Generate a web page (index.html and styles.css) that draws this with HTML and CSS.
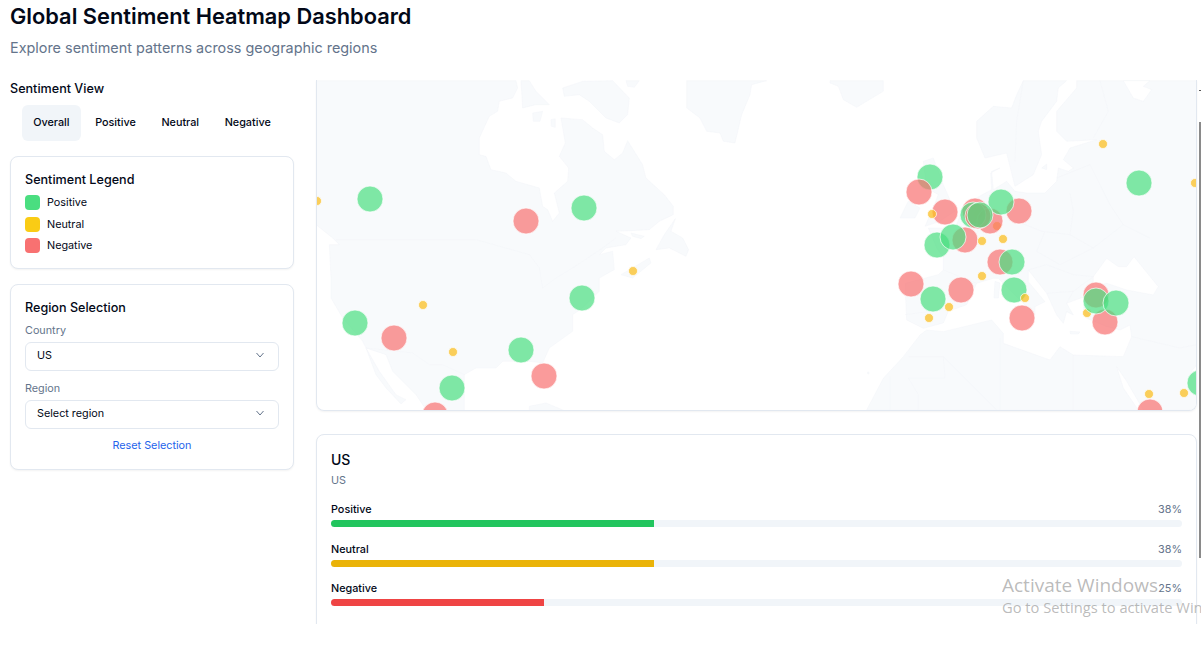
FILE: index.html
```html
<!DOCTYPE html>
<html lang="en">
<head>
    <meta charset="UTF-8">
    <title>Global Sentiment Heatmap Dashboard</title>
    <link rel="stylesheet" href="styles.css">
</head>
<body>
<div class="page">
    <header class="header">
        <h1>Global Sentiment Heatmap Dashboard</h1>
        <p>Explore sentiment patterns across geographic regions</p>
    </header>

    <div class="layout">
        <aside class="sidebar">
            <h2 class="view-title">Sentiment View</h2>
            <div class="tabs">
                <button class="tab active">Overall</button>
                <button class="tab">Positive</button>
                <button class="tab">Neutral</button>
                <button class="tab">Negative</button>
            </div>

            <section class="card legend">
                <h3>Sentiment Legend</h3>
                <div class="legend-row"><span class="swatch green"></span>Positive</div>
                <div class="legend-row"><span class="swatch yellow"></span>Neutral</div>
                <div class="legend-row"><span class="swatch red"></span>Negative</div>
            </section>

            <section class="card region">
                <h3>Region Selection</h3>
                <label>Country</label>
                <div class="select">US
                    <svg width="12" height="12" viewBox="0 0 24 24"><path d="M5 8l7 8 7-8"/></svg>
                </div>
                <label>Region</label>
                <div class="select">Select region
                    <svg width="12" height="12" viewBox="0 0 24 24"><path d="M5 8l7 8 7-8"/></svg>
                </div>
                <a class="reset">Reset Selection</a>
            </section>
        </aside>

        <main class="main">
            <div class="map-card">
                <svg class="map" width="881" height="331" viewBox="316 80 881 331">
                    <!-- North America -->
                    <g class="land" transform="translate(316 78) scale(0.3333)">
                        <path d="M0 8L600 8L605 30L590 60L550 70L545 100L520 115L490 180L490 230L510 235L525 275L570 285L600 310L670 330L680 385L695 395L710 430L730 405L715 345L755 310L758 270L730 235L748 195L735 120L800 125L830 150L860 170L865 220L895 245L920 225L935 188L980 260L990 300L1045 350L1072 385L1072 410L1030 430L1000 455L945 458L900 460L945 480L930 500L870 510L850 530L890 520L895 575L850 600L850 640L800 690L770 710L770 760L700 810L680 855L640 850L600 850L560 850L540 870L480 870L445 890L445 1010L340 1010L300 950L230 880L210 830L150 810L140 790L80 720L45 660L45 600L40 500L70 500L50 480L0 440Z"/>
                        <path d="M150 810L190 880L240 950L270 965L255 978L210 930L180 890Z"/>
                        <path d="M615 8L620 90L660 80L700 80L660 40L640 8Z"/>
                        <path d="M650 105L680 100L672 130L652 130Z"/>
                        <path d="M705 125L718 122L718 148L706 145Z"/>
                        <path d="M740 30L800 10L890 8L940 60L935 110L910 135L870 120L820 70L790 50L745 55Z"/>
                        <path d="M930 8L970 8L955 28L935 25Z"/>
                        <path d="M1020 515L1045 470L1078 422L1065 460L1100 480L1118 515L1110 535L1060 510Z"/>
                        <path d="M915 590L1000 540L1005 555L950 600Z"/>
                        <path d="M945 465L985 475L975 482L950 475Z"/>
                        <path d="M640 985L690 975L750 1000L640 1000Z"/>
                        <path class="line" d="M60 485L480 485L640 530L670 570L680 630L720 600L770 570L860 510L900 480"/>
                        <path class="line" d="M150 810L290 825L340 860L380 860L445 890"/>
                    </g>
                    <!-- Greenland and the island north of Europe -->
                    <g class="land" transform="translate(700 78) scale(0.3333)">
                        <path d="M-40 8L200 8L155 20L150 50L125 110L105 195L70 190L60 165L20 160L0 120L-40 90Z"/>
                        <path d="M390 8L550 8L550 40L470 88L430 65L415 25L390 15Z"/>
                        <circle cx="505" cy="885" r="3"/>
                    </g>
                    <!-- Europe, Africa and the Middle East: y below 486 continues the lower half -->
                    <g class="land" transform="translate(860 78) scale(0.3333)">
                        <path d="M490 8L470 50L455 90L400 85L350 130L350 180L375 240L440 225L465 325L520 290L545 230L535 160L545 130L590 70L595 30L620 8Z"/>
                        <path d="M650 8L650 30L590 100L590 160L620 190L710 185L630 210L610 245L640 270L625 280L595 270L590 310L555 345L500 345L465 340L440 310L400 335L395 280L420 270L392 285L395 335L345 362L310 385L290 440L250 450L205 450L230 510L250 540L250 576L235 590L135 616L140 726L190 751L250 735L265 700L320 680L350 616L400 601L415 601L450 636L495 681L525 711L525 686L555 671L505 611L505 576L560 646L590 711L610 736L620 701L640 711L620 676L660 661L700 651L670 686L680 721L740 746L780 756L810 741L815 776L790 836L640 831L600 806L570 846L430 796L430 766L395 726L250 761L200 756L180 771L130 836L70 901L20 996L1011 996L1011 8Z"/>
                        <path class="sea" d="M790 8L820 60L850 70L875 35L850 25L870 8Z"/>
                        <path class="sea" d="M700 596L740 541L775 566L800 566L822 536L895 626L880 651L800 636L740 616L700 626Z"/>
                        <path class="sea" d="M770 866L800 910L850 996L835 996L790 930Z"/>
                        <path class="sea" d="M1011 860L995 880L1011 905Z"/>
                        <path d="M190 250L220 240L250 320L285 400L240 430L195 445L215 400L235 350L200 330Z"/>
                        <path d="M120 420L145 370L180 390L165 420Z"/>
                        <path d="M405 610L420 615L415 660L402 660Z"/>
                        <path d="M630 760L660 762L655 768L632 768Z"/>
                        <path d="M545 270L560 258L560 275Z"/>
                        <path class="line" d="M490 8L470 130L465 250M720 8L745 100L700 180M690 260L590 300M690 260L750 380L790 440L870 480M630 345L640 400L630 470L545 460L470 430M630 470L700 510L790 440M555 460L530 520L600 560L700 510M505 576L560 560L640 590L700 596M560 646L640 640L700 596M640 831L640 996M420 780L420 996M145 836L250 836L410 996M250 836L255 900L145 900L175 950L175 996M90 896L90 996M815 776L960 810L1011 800M640 640L620 676M290 440L350 470L395 335M250 576L350 616M135 710L210 700"/>
                    </g>
                </svg>
                <svg class="map dots" width="881" height="331" viewBox="316 80 881 331">
                    <g class="dot-y">
                        <circle cx="317" cy="201" r="4.5"/><circle cx="633" cy="271" r="4.5"/>
                        <circle cx="423" cy="305" r="4.5"/><circle cx="453" cy="352" r="4.5"/>
                        <circle cx="1103" cy="144" r="4.5"/><circle cx="1195" cy="183" r="4.5"/>
                        <circle cx="997" cy="226" r="4.5"/><circle cx="1087" cy="313" r="4.5"/>
                        <circle cx="978" cy="214" r="4.5"/>
                    </g>
                    <g class="dot-g">
                        <circle cx="370" cy="199" r="13"/><circle cx="584" cy="208" r="13"/>
                        <circle cx="582" cy="298" r="13"/><circle cx="355" cy="323" r="13"/>
                        <circle cx="521" cy="350" r="13"/><circle cx="452" cy="388" r="13"/>
                        <circle cx="930" cy="177" r="13"/><circle cx="1139" cy="183" r="13"/>
                    </g>
                    <g class="dot-r">
                        <circle cx="526" cy="221" r="13"/><circle cx="394" cy="338" r="13"/>
                        <circle cx="544" cy="376" r="13"/><circle cx="435" cy="415" r="13"/>
                        <circle cx="919" cy="192" r="13"/><circle cx="945" cy="212" r="13"/>
                        <circle cx="975" cy="211" r="13"/><circle cx="990" cy="221" r="13"/>
                        <circle cx="1019" cy="211" r="13"/>
                        <circle cx="965" cy="240" r="13"/><circle cx="1000" cy="262" r="13"/>
                        <circle cx="911" cy="284" r="13"/><circle cx="961" cy="290" r="13"/>
                        <circle cx="1022" cy="318" r="13"/><circle cx="1096" cy="295" r="13"/>
                        <circle cx="1105" cy="322" r="13"/><circle cx="1150" cy="412" r="13"/>
                    </g>
                    <g class="dot-g">
                        <circle cx="1001" cy="202" r="13"/><circle cx="973" cy="215" r="13"/>
                    </g>
                    <g class="dot-r">
                        <circle cx="978" cy="216" r="13"/>
                    </g>
                    <g class="dot-g">
                        <circle cx="980" cy="215" r="13"/><circle cx="937" cy="245" r="13"/>
                        <circle cx="953" cy="237" r="13"/><circle cx="1012" cy="262" r="13"/>
                        <circle cx="933" cy="299" r="13"/><circle cx="1014" cy="290" r="13"/>
                        <circle cx="1096" cy="301" r="13"/><circle cx="1116" cy="303" r="13"/>
                        <circle cx="1200" cy="383" r="13"/>
                    </g>
                    <g class="dot-y">
                        <circle cx="932" cy="214" r="4.5"/><circle cx="982" cy="241" r="4.5"/>
                        <circle cx="1003" cy="239" r="4.5"/>
                        <circle cx="982" cy="276" r="4.5"/><circle cx="949" cy="307" r="4.5"/>
                        <circle cx="929" cy="318" r="4.5"/><circle cx="1025" cy="298" r="4.5"/>
                        <circle cx="1149" cy="394" r="4.5"/><circle cx="1184" cy="393" r="4.5"/>
                    </g>
                </svg>
            </div>

            <section class="card details">
                <h3>US</h3>
                <p class="sub">US</p>
                <div class="stat">
                    <div class="stat-label"><span>Positive</span><span class="pct">38%</span></div>
                    <div class="track"><div class="fill fill-green" style="width:38%"></div></div>
                </div>
                <div class="stat">
                    <div class="stat-label"><span>Neutral</span><span class="pct">38%</span></div>
                    <div class="track"><div class="fill fill-yellow" style="width:38%"></div></div>
                </div>
                <div class="stat">
                    <div class="stat-label"><span>Negative</span><span class="pct">25%</span></div>
                    <div class="track"><div class="fill fill-red" style="width:25%"></div></div>
                </div>
            </section>
        </main>
    </div>

    <div class="thumb"></div>
    <div class="watermark">
        <div class="wm-big">Activate Windows</div>
        <div class="wm-small">Go to Settings to activate Windows.</div>
    </div>
</div>
</body>
</html>
```

FILE: styles.css
```css
* {
    box-sizing: border-box;
}
html, body {
    margin: 0;
    background: #fff;
}
body {
    font-family: Inter, "Liberation Sans", sans-serif;
    color: #020817;
    overflow: hidden;
}
.page {
    position: relative;
    height: 624px;
    overflow: hidden;
}
.header {
    padding: 0 10px;
    height: 80px;
}
.header h1 {
    margin: 0;
    padding-top: 2px;
    font-size: 21.8px;
    line-height: 28px;
    font-weight: 600;
}
.header p {
    margin: 8px 0 0;
    font-size: 14.4px;
    line-height: 20px;
    color: #64748b;
}
.layout {
    display: flex;
    gap: 22px;
    padding-left: 10px;
}
.sidebar {
    width: 284px;
    flex: none;
}
.view-title {
    margin: 0;
    font-size: 12.6px;
    line-height: 18px;
    font-weight: 450;
}
.tabs {
    display: flex;
    justify-content: center;
    gap: 3.6px;
    margin-top: 7px;
}
.tab {
    border: 0;
    background: none;
    font: 450 10.8px Inter, sans-serif;
    color: #020817;
    height: 36px;
    padding: 0 11px 2px;
    border-radius: 6px;
}
.tab.active {
    background: #f1f5f9;
}
.card {
    background: #fff;
    border: 1px solid #e2e8f0;
    border-radius: 8px;
    box-shadow: 0 1px 2px rgba(0, 0, 0, 0.05);
}
.card h3 {
    margin: 0;
    font-size: 12.6px;
    line-height: 18px;
    font-weight: 450;
}
.legend {
    margin-top: 15px;
    height: 113px;
    padding: 14px;
}
.legend h3 {
    margin-bottom: 6px;
}
.legend-row {
    display: flex;
    align-items: center;
    gap: 7px;
    height: 15px;
    margin-top: 6px;
    font-size: 10.8px;
    line-height: 13px;
}
.legend h3 + .legend-row + .legend-row {
    margin-top: 7px;
}
.swatch {
    width: 15px;
    height: 15px;
    border-radius: 4px;
}
.green { background: #4ade80; }
.yellow { background: #facc15; }
.red { background: #f87171; }
.region {
    margin-top: 15px;
    height: 186px;
    padding: 14px 14px;
    display: flex;
    flex-direction: column;
}
.region label {
    margin-top: 6px;
    font-size: 10.8px;
    line-height: 16px;
    color: #64748b;
}
.region label + .select + label {
    margin-top: 10px;
}
.select {
    display: flex;
    align-items: center;
    justify-content: space-between;
    height: 29px;
    margin-top: 3px;
    padding: 0 12px 3px 11px;
    border: 1px solid #e2e8f0;
    border-radius: 6px;
    font-size: 10.8px;
}
.select svg {
    fill: none;
    stroke: #64748b;
    stroke-width: 2;
}
.reset {
    margin-top: 9px;
    text-align: center;
    font-size: 10.8px;
    line-height: 16px;
    color: #2563eb;
}
.main {
    width: 881px;
    flex: none;
}
.map-card {
    position: relative;
    height: 331px;
    border: 1px solid #e2e8f0;
    border-top: 0;
    border-radius: 0 0 8px 8px;
    box-shadow: 0 1px 2px rgba(0, 0, 0, 0.05);
    overflow: hidden;
}
.map {
    position: absolute;
    left: -1px;
    top: 0;
    display: block;
}
.land path, .land circle {
    fill: #f8fafc;
    stroke: #f3f5f9;
    stroke-width: 1.5;
}
.land .line {
    fill: none;
}
.land .sea {
    fill: #fff;
}
.dot-g circle {
    fill: #4ade80;
    fill-opacity: 0.7;
    stroke: #fff;
    stroke-opacity: 0.7;
}
.dot-r circle {
    fill: #f87171;
    fill-opacity: 0.7;
    stroke: #fff;
    stroke-opacity: 0.7;
}
.dot-y circle {
    fill: #fbbf24;
    fill-opacity: 0.75;
    stroke: #fff;
    stroke-opacity: 0.7;
}
.details {
    margin-top: 23px;
    height: 260px;
    padding: 15px 14px;
}
.details h3 {
    font-size: 14px;
    line-height: 20px;
}
.sub {
    margin: 3px 0 0;
    font-size: 10.8px;
    line-height: 16px;
    color: #64748b;
}
.stat {
    margin-top: 15px;
}
.stat:last-child {
    margin-top: 14px;
}
.sub + .stat {
    margin-top: 13px;
}
.stat-label {
    display: flex;
    justify-content: space-between;
    font-size: 10.8px;
    line-height: 16px;
    font-weight: 450;
}
.pct {
    font-weight: 400;
    color: #64748b;
}
.track {
    height: 7px;
    margin-top: 2px;
    background: #f1f5f9;
    border-radius: 4px;
    overflow: hidden;
}
.fill {
    height: 100%;
}
.fill-green { background: #22c55e; }
.fill-yellow { background: #eab308; }
.fill-red { background: #ef4444; }
.thumb {
    position: absolute;
    left: 1199px;
    top: 122px;
    width: 2px;
    height: 436px;
    background: #8a8a8a;
}
.thumb::before {
    content: "";
    position: absolute;
    left: 0;
    top: -32px;
    width: 2px;
    height: 1px;
    background: #555;
}
.watermark {
    position: absolute;
    left: 1002px;
    top: 573px;
    width: 199px;
    overflow: hidden;
    white-space: nowrap;
    font-family: "Open Sans", sans-serif;
    color: rgba(130, 130, 130, 0.55);
}
.wm-big {
    font-size: 19px;
    line-height: 24px;
}
.wm-small {
    font-size: 14.7px;
    line-height: 21px;
}
```
